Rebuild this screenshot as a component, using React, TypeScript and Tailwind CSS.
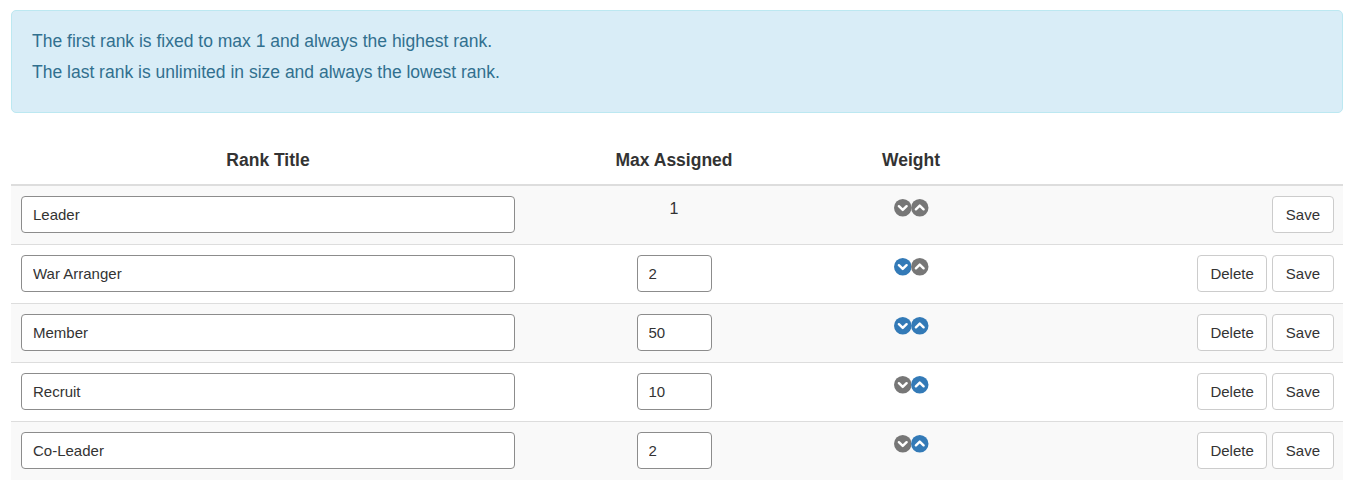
import React from "react";

const BLUE = "#337ab7";
const GRAY = "#777777";

function CircleChevron({ dir, color }: { dir: "down" | "up"; color: string }) {
  return (
    <svg width="17.5" height="17.5" viewBox="0 0 20 20" className="block">
      <circle cx="10" cy="10" r="10" fill={color} />
      {dir === "down" ? (
        <path d="M5.6 8.2 L10 12.4 L14.4 8.2" fill="none" stroke="#fff" strokeWidth="2.8" strokeLinecap="round" strokeLinejoin="round" />
      ) : (
        <path d="M5.6 11.8 L10 7.6 L14.4 11.8" fill="none" stroke="#fff" strokeWidth="2.8" strokeLinecap="round" strokeLinejoin="round" />
      )}
    </svg>
  );
}

type Row = { title: string; max: string | null; down: string; up: string; del: boolean };

const rows: Row[] = [
  { title: "Leader", max: null, down: GRAY, up: GRAY, del: false },
  { title: "War Arranger", max: "2", down: BLUE, up: GRAY, del: true },
  { title: "Member", max: "50", down: BLUE, up: BLUE, del: true },
  { title: "Recruit", max: "10", down: GRAY, up: BLUE, del: true },
  { title: "Co-Leader", max: "2", down: GRAY, up: BLUE, del: true },
];

function DeleteBtn() {
  return (
    <button className="h-[37px] px-[12px] border border-[#cccccc] rounded-[4px] bg-white text-[15px] text-[#333333] leading-none">
      Delete
    </button>
  );
}

function SaveBtn() {
  return (
    <button className="h-[37px] px-[13px] border border-[#cccccc] rounded-[4px] bg-white text-[15px] text-[#333333] leading-none">
      Save
    </button>
  );
}

export default function App() {
  return (
    <div className="w-[1353px] bg-white pl-[11px] pr-[10px] pt-[10px] text-[#333333]" style={{ fontFamily: '"Liberation Sans", Arial, sans-serif' }}>
      <div className="bg-[#d9edf7] border border-[#bce8f1] rounded-[5px] pl-[20px] pt-[18px] pb-[27px] text-[#31708f] text-[17.5px] leading-[25px]">
        <div>The first rank is fixed to max 1 and always the highest rank.</div>
        <div className="mt-[6px]">The last rank is unlimited in size and always the lowest rank.</div>
      </div>

      <div className="mt-[25px]">
        <div className="grid grid-cols-[514px_298px_176px_1fr] border-b-2 border-[#dddddd] pt-[10px] pb-[11px] text-[17.5px] leading-[25px] font-bold">
          <div className="text-center">Rank Title</div>
          <div className="text-center">Max Assigned</div>
          <div className="text-center">Weight</div>
          <div></div>
        </div>
        {rows.map((r, i) => (
          <div
            key={r.title}
            className={`grid grid-cols-[514px_298px_176px_1fr] ${i > 0 ? "border-t border-[#dddddd]" : ""} ${i % 2 === 0 ? "bg-[#f9f9f9]" : "bg-white"} pt-[10px] pb-[11px] text-[17.5px] leading-[25px]`}
          >
            <div className="px-[10px]">
              <input
                readOnly
                value={r.title}
                className="w-full h-[37px] border border-[#8c8c8c] rounded-[4px] bg-white pl-[11px] text-[15px] text-[#333333] outline-none"
              />
            </div>
            <div className="flex justify-center">
              {r.max === null ? (
                <span className="text-[16px] leading-[25px] text-[#333333]">1</span>
              ) : (
                <input
                  readOnly
                  value={r.max}
                  className="w-[75px] h-[37px] border border-[#8c8c8c] rounded-[4px] bg-white pl-[11px] text-[15px] text-[#333333] outline-none"
                />
              )}
            </div>
            <div className="flex justify-center items-start pt-[3px]">
              <div className="flex">
                <CircleChevron dir="down" color={r.down} />
                <CircleChevron dir="up" color={r.up} />
              </div>
            </div>
            <div className="flex justify-end gap-[5px] pr-[9px]">
              {r.del && <DeleteBtn />}
              <SaveBtn />
            </div>
          </div>
        ))}
      </div>
    </div>
  );
}
